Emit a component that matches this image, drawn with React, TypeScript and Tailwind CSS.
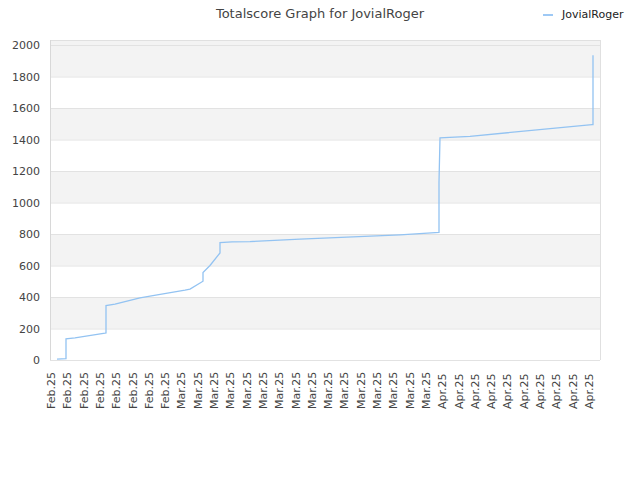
const Y = (v: number) => 360 - v * 0.1575;

const pts: [number, number][] = [
  [57, 5], [66, 8], [66, 135], [75, 140], [105, 170], [106, 172], [106, 345], [115, 355],
  [140, 395], [150, 405], [185, 443], [190, 450], [203, 500], [203, 555], [210, 600],
  [220, 680], [220, 745], [232, 750], [250, 752], [300, 768], [400, 795], [439, 810],
  [439, 1130], [440, 1410], [470, 1420], [592, 1495], [593, 1495], [593, 1935],
];

const labels = Array.from({ length: 34 }, (_, i) => ({
  x: 55 + i * 16.3,
  t: i < 8 ? "Feb.25" : i < 24 ? "Mar.25" : "Apr.25",
}));

export default function App() {
  const font = '"DejaVu Sans", Verdana, sans-serif';
  return (
    <div className="relative w-[640px] h-[480px] bg-white" style={{ fontFamily: font }}>
      <div className="absolute top-[4px] left-0 w-full text-center text-[13px] text-[#444]">
        Totalscore Graph for JovialRoger
      </div>
      <div className="absolute top-[7px] left-[543px] flex items-center gap-[9px] text-[11px] text-[#222]">
        <span className="block w-[10px] h-[2px] bg-[#9ec9f5]" />
        JovialRoger
      </div>
      <svg width="640" height="480" className="block">
        {[0, 1, 2, 3, 4].map((k) => (
          <rect key={k} x={50} y={k === 0 ? 40 : Y(1800 - k * 400 + 200)} width={550}
            height={k === 0 ? Y(1800) - 40 : 31.5} fill="#f3f3f3" />
        ))}
        <rect x={50} y={40} width={550} height={1} fill="#e0e0e0" />
        {Array.from({ length: 11 }, (_, i) => i * 200).map((v) => (
          <g key={v}>
            <line x1={50} x2={600} y1={Y(v) + 0.5} y2={Y(v) + 0.5} stroke="#e2e2e2" />
            <text x={40} y={Y(v) + 4} textAnchor="end" fontSize="11" fill="#444" fontFamily={font}>{v}</text>
          </g>
        ))}
        <line x1={50.5} x2={50.5} y1={40} y2={360} stroke="#d8d8d8" />
        <line x1={600.5} x2={600.5} y1={40} y2={360} stroke="#e0e0e0" />
        <polyline points={pts.map(([x, v]) => `${x},${Y(v)}`).join(" ")} fill="none" stroke="#93c3f2" strokeWidth="1.3" />
        {labels.map((l, i) => (
          <text key={i} x={0} y={0} transform={`translate(${l.x} 409) rotate(-90)`} fontSize="11" fill="#444" fontFamily={font}>{l.t}</text>
        ))}
      </svg>
    </div>
  );
}
